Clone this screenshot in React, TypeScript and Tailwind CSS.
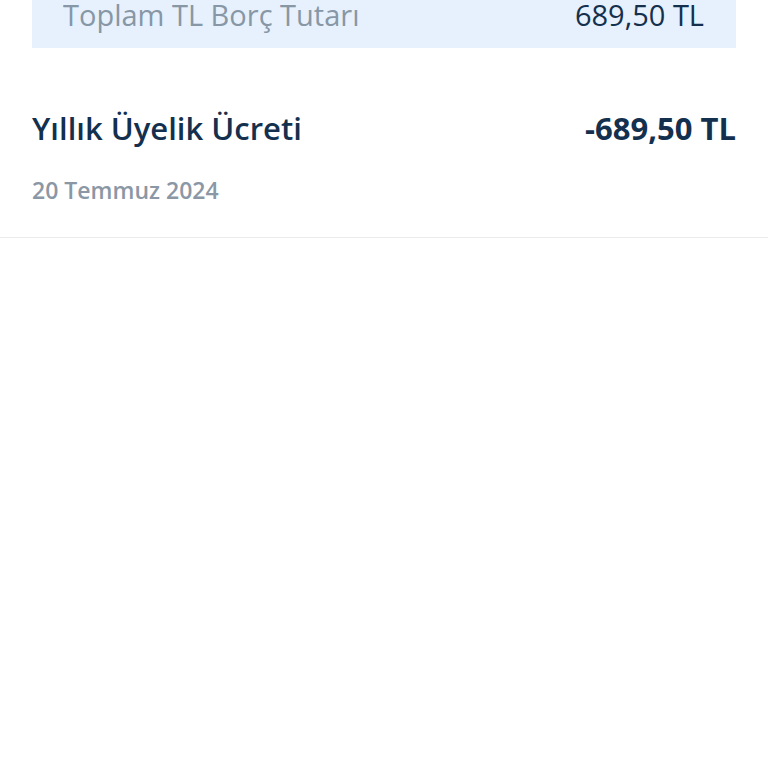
import React from 'react'

const App = () => {
  return (
    <div className="w-[768px] h-[768px] overflow-hidden bg-white font-['Open_Sans',sans-serif]">
      <div className="mx-8 -mt-[25px] pt-[21px] pb-[14px] pl-[31px] pr-8 bg-[#e6f1fd] flex items-center justify-between">
        <span className="text-[29px] leading-[38px] text-[#8797a6]">Toplam TL Borç Tutarı</span>
        <span className="text-[29px] leading-[38px] font-medium text-[#15304d]">689,50 TL</span>
      </div>

      <div className="px-8 pt-[60px] pb-[32px] border-b border-[#e9ebee]">
        <div className="flex items-center justify-between">
          <span className="text-[31px] leading-[40px] font-semibold text-[#14304f]">Yıllık Üyelik Ücreti</span>
          <span className="text-[31px] leading-[40px] font-bold text-[#14304f]">-689,50 TL</span>
        </div>
        <div className="mt-[27px] text-[23px] leading-[30px] font-semibold text-[#8b97a5]">20 Temmuz 2024</div>
      </div>
    </div>
  )
}

export default App
